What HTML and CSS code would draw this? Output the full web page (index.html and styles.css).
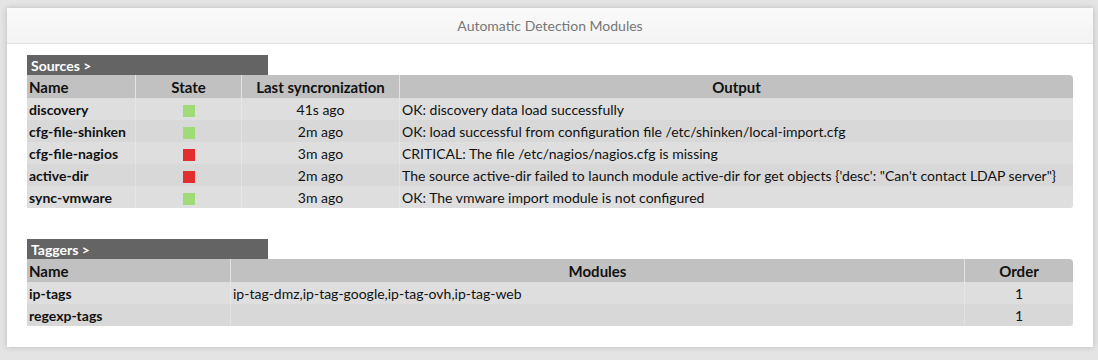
FILE: index.html
```html
<!DOCTYPE html>
<html lang="en">
<head>
  <meta charset="UTF-8">
  <title>Automatic Detection Modules</title>
  <link rel="stylesheet" href="styles.css">
</head>
<body>
  <div class="panel">
    <div class="panel-heading">Automatic Detection Modules</div>
    <div class="panel-body">

      <div class="section">
        <div class="section-tab">Sources &gt;</div>
        <table class="grid">
          <colgroup>
            <col style="width:108px">
            <col style="width:106px">
            <col style="width:158px">
            <col>
          </colgroup>
          <thead>
            <tr>
              <th class="left">Name</th>
              <th>State</th>
              <th>Last syncronization</th>
              <th>Output</th>
            </tr>
          </thead>
          <tbody>
            <tr>
              <td class="name">discovery</td>
              <td class="center"><span class="state ok"></span></td>
              <td class="center">41s ago</td>
              <td>OK: discovery data load successfully</td>
            </tr>
            <tr>
              <td class="name">cfg-file-shinken</td>
              <td class="center"><span class="state ok"></span></td>
              <td class="center">2m ago</td>
              <td>OK: load successful from configuration file /etc/shinken/local-import.cfg</td>
            </tr>
            <tr>
              <td class="name">cfg-file-nagios</td>
              <td class="center"><span class="state critical"></span></td>
              <td class="center">3m ago</td>
              <td>CRITICAL: The file /etc/nagios/nagios.cfg is missing</td>
            </tr>
            <tr>
              <td class="name">active-dir</td>
              <td class="center"><span class="state critical"></span></td>
              <td class="center">2m ago</td>
              <td>The source active-dir failed to launch module active-dir for get objects {'desc': "Can't contact LDAP server"}</td>
            </tr>
            <tr>
              <td class="name">sync-vmware</td>
              <td class="center"><span class="state ok"></span></td>
              <td class="center">3m ago</td>
              <td>OK: The vmware import module is not configured</td>
            </tr>
          </tbody>
        </table>
      </div>

      <div class="section">
        <div class="section-tab">Taggers &gt;</div>
        <table class="grid">
          <colgroup>
            <col style="width:203px">
            <col>
            <col style="width:109px">
          </colgroup>
          <thead>
            <tr>
              <th class="left">Name</th>
              <th>Modules</th>
              <th>Order</th>
            </tr>
          </thead>
          <tbody>
            <tr>
              <td class="name">ip-tags</td>
              <td>ip-tag-dmz,ip-tag-google,ip-tag-ovh,ip-tag-web</td>
              <td class="center">1</td>
            </tr>
            <tr>
              <td class="name">regexp-tags</td>
              <td></td>
              <td class="center">1</td>
            </tr>
          </tbody>
        </table>
      </div>

    </div>
  </div>
</body>
</html>
```

FILE: styles.css
```css
body {
  font-family: Lato, "Open Sans", sans-serif;
  font-size: 14px;
  color: #111;
  background-color: #e4e4e4;
  margin: 0;
  padding: 8px 5px 12px 7px;
}
.panel {
  background-color: #fff;
  box-shadow: 0 0 6px rgba(0, 0, 0, 0.18);
}
.panel-heading {
  height: 35px;
  line-height: 35px;
  text-align: center;
  font-size: 14px;
  color: #777;
  background: linear-gradient(to bottom, #fafafa, #f3f3f3);
  border-bottom: 1px solid #e2e2e2;
}
.panel-body {
  padding: 11px 20px 21px 20px;
}
.section + .section {
  margin-top: 31px;
}
.section-tab {
  width: 237px;
  height: 20px;
  line-height: 21px;
  padding-left: 4px;
  background-color: #646464;
  color: #fff;
  font-weight: bold;
  font-size: 14px;
}
.grid {
  width: 100%;
  border-collapse: separate;
  border-spacing: 0;
  table-layout: fixed;
}
.grid th {
  height: 23px;
  padding: 0 2px;
  background-color: #c1c1c1;
  font-weight: bold;
  font-size: 15px;
  text-align: center;
  border-left: 1px solid #e4e4e4;
}
.grid th:first-child {
  border-left: none;
}
.grid th:last-child {
  border-top-right-radius: 4px;
}
.grid th.left {
  text-align: left;
}
.grid td {
  height: 22px;
  padding: 0 2px;
  white-space: nowrap;
  border-left: 1px solid rgba(255, 255, 255, 0.25);
}
.grid td:first-child {
  border-left: none;
}
.grid tbody tr:nth-child(odd) td {
  background-color: #dedede;
}
.grid tbody tr:nth-child(even) td {
  background-color: #d8d8d8;
}
.grid tbody tr:last-child td:last-child {
  border-bottom-right-radius: 3px;
}
.grid td.name {
  font-weight: bold;
}
.grid td.center {
  text-align: center;
}
.state {
  display: inline-block;
  width: 12px;
  height: 12px;
  vertical-align: -2px;
}
.state.ok {
  background-color: #a0db78;
}
.state.critical {
  background-color: #e22e2e;
}
```
